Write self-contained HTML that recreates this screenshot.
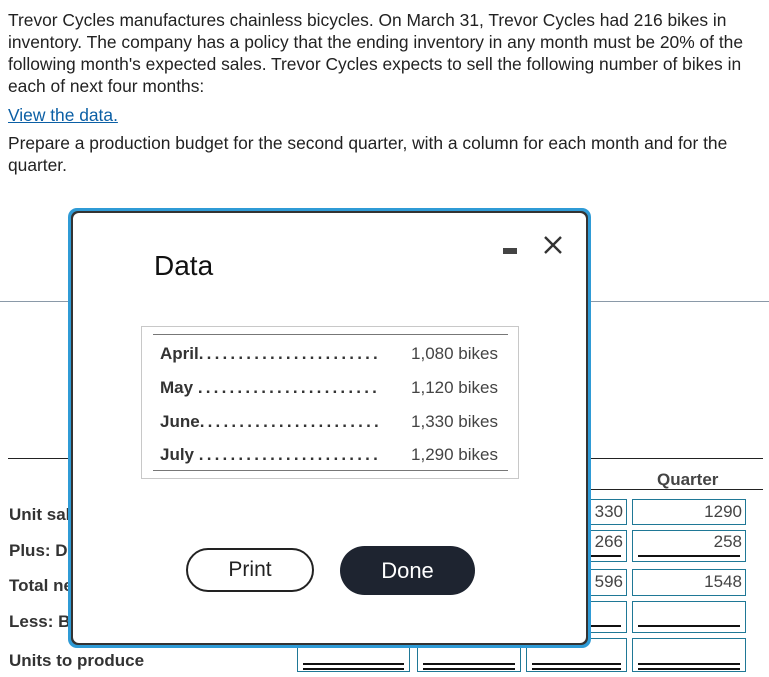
<!DOCTYPE html>
<html><head><style>
body{margin:0;width:769px;height:677px;position:relative;overflow:hidden;background:#fff;font-family:"Liberation Sans",Arial,sans-serif;color:#222;}
.p{position:absolute;left:8px;width:755px;font-size:17.4px;line-height:22px;}
a{color:#0b5fa5;text-decoration:underline;}
.abs{position:absolute;}
.lbl{position:absolute;left:9px;font-size:17px;font-weight:bold;color:#333;}
.box{position:absolute;border:1.5px solid #1f7896;box-sizing:border-box;font-size:17px;color:#444;text-align:right;padding-right:3px;}
.ul{position:absolute;left:5px;right:5px;border-top:2px solid #111;}
.dl{position:absolute;left:5px;right:5px;height:3px;border-top:2px solid #111;border-bottom:2px solid #111;}
.row{position:absolute;left:18px;width:222px;height:34px;overflow:hidden;white-space:nowrap;font-size:17px;color:#333;}
.row span{letter-spacing:3.2px;font-weight:bold;}
.v{position:absolute;right:20px;font-size:17px;color:#444;}
</style></head><body>
<div class="p" style="top:9px">Trevor Cycles manufactures chainless bicycles. On March 31, Trevor Cycles had 216 bikes in inventory. The company has a policy that the ending inventory in any month must be 20% of the following month's expected sales. Trevor Cycles expects to sell the following number of bikes in each of next four months:</div>
<div class="p" style="top:104px"><a>View the data.</a></div>
<div class="p" style="top:132px">Prepare a production budget for the second quarter, with a column for each month and for the quarter.</div>
<div class="abs" style="left:0;top:301px;width:769px;border-top:1px solid #8a99a8"></div>
<div class="abs" style="left:8px;top:458px;width:755px;border-top:1.5px solid #222"></div>
<div class="abs" style="left:588px;top:489px;width:175px;border-top:1.5px solid #222"></div>
<div class="abs" style="left:657px;top:470px;font-size:17px;font-weight:bold;color:#444">Quarter</div>
<div class="lbl" style="top:505px">Unit sales</div>
<div class="lbl" style="top:541px">Plus: Desired</div>
<div class="lbl" style="top:576px">Total needed</div>
<div class="lbl" style="top:612px">Less: Beginning</div>
<div class="lbl" style="top:651px">Units to produce</div>
<div class="box" style="left:526px;top:499px;width:101px;height:26px;line-height:23px">330</div>
<div class="box" style="left:526px;top:530px;width:101px;height:32px;line-height:22px">266<div class="ul" style="top:24px"></div></div>
<div class="box" style="left:526px;top:569px;width:101px;height:27px;line-height:24px">596</div>
<div class="box" style="left:526px;top:601px;width:101px;height:32px"><div class="ul" style="top:23px"></div></div>
<div class="box" style="left:526px;top:638px;width:101px;height:34px"><div class="dl" style="top:24px"></div></div>
<div class="box" style="left:632px;top:499px;width:114px;height:26px;line-height:23px">1290</div>
<div class="box" style="left:632px;top:530px;width:114px;height:32px;line-height:22px">258<div class="ul" style="top:24px"></div></div>
<div class="box" style="left:632px;top:569px;width:114px;height:27px;line-height:24px">1548</div>
<div class="box" style="left:632px;top:601px;width:114px;height:32px"><div class="ul" style="top:23px"></div></div>
<div class="box" style="left:632px;top:638px;width:114px;height:34px"><div class="dl" style="top:24px"></div></div>
<div class="box" style="left:297px;top:638px;width:113px;height:34px"><div class="dl" style="top:24px"></div></div>
<div class="box" style="left:417px;top:638px;width:104px;height:34px"><div class="dl" style="top:24px"></div></div>
<div class="abs" style="left:68px;top:208px;width:523px;height:440px;border-radius:9px;background:#2f9bd6;"></div>
<div class="abs" style="left:71px;top:211px;width:517px;height:434px;border-radius:7px;background:#333;"></div>
<div class="abs" style="left:73px;top:213px;width:513px;height:430px;border-radius:6px;background:#fff;">
 <div class="abs" style="left:81px;top:37px;font-size:28px;color:#111">Data</div>
 <div class="abs" style="left:430px;top:35px;width:14px;height:6px;background:#444"></div>
 <svg class="abs" style="left:470px;top:22px" width="20" height="20" viewBox="0 0 20 20"><path d="M2 2L18 18M18 2L2 18" stroke="#333" stroke-width="2.4"/></svg>
 <div class="abs" style="left:68px;top:113px;width:376px;height:151px;border:1px solid #c8c8c8;">
  <div class="abs" style="left:11px;top:7px;width:355px;border-top:1.5px solid #777"></div>
  <div class="abs" style="left:11px;top:143px;width:355px;border-top:1.5px solid #777"></div>
  <div class="row" style="top:17px;line-height:20px"><b>April</b><span>.......................</span></div>
  <div class="row" style="top:51px;line-height:20px"><b>May</b> <span>.......................</span></div>
  <div class="row" style="top:85px;line-height:20px"><b>June</b><span>.......................</span></div>
  <div class="row" style="top:118px;line-height:20px"><b>July</b> <span>.......................</span></div>
  <div class="v" style="top:17px">1,080 bikes</div>
  <div class="v" style="top:51px">1,120 bikes</div>
  <div class="v" style="top:85px">1,330 bikes</div>
  <div class="v" style="top:118px">1,290 bikes</div>
 </div>
 <div class="abs" style="left:113px;top:335px;width:128px;height:44px;border:2px solid #222;border-radius:23px;box-sizing:border-box;text-align:center;line-height:40px;font-size:21px;color:#222">Print</div>
 <div class="abs" style="left:267px;top:333px;width:135px;height:49px;background:#1e2430;border-radius:25px;text-align:center;line-height:49px;font-size:22px;color:#fff">Done</div>
</div>
</body></html>
